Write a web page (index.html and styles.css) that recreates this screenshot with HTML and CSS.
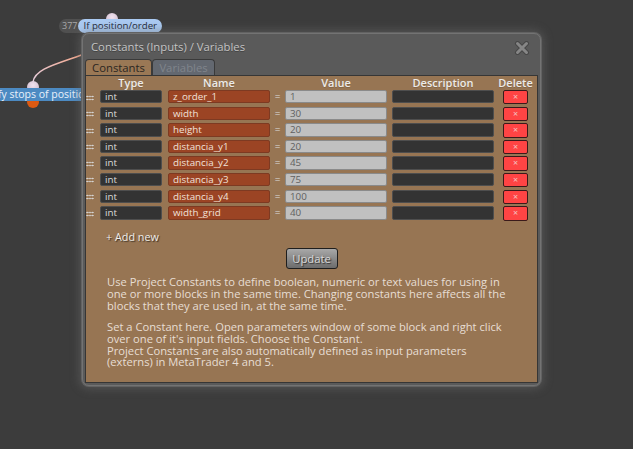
FILE: index.html
```html
<!DOCTYPE html>
<html>
<head>
<meta charset="utf-8">
<link rel="stylesheet" href="styles.css">
</head>
<body>
<div class="canvas">
  <svg class="wire" width="120" height="120" viewBox="0 0 120 120">
    <defs>
      <linearGradient id="wg" x1="0" y1="1" x2="1" y2="0">
        <stop offset="0" stop-color="#e6cfe0"/>
        <stop offset="1" stop-color="#f5a07e"/>
      </linearGradient>
    </defs>
    <path d="M33 82 C 35 68, 58 64, 90 52" fill="none" stroke="url(#wg)" stroke-width="1.5"/>
  </svg>

  <div class="node node-top">
    <span class="pin pin-top"></span>
    <span class="node-id">377</span>
    <span class="node-label">If position/order</span>
  </div>

  <div class="node node-left">
    <span class="pin pin-in"></span>
    <span class="pin pin-out"></span>
    <span class="node-bar">fy stops of position/order</span>
  </div>

  <div class="dialog">
    <div class="dialog-title">
      <span>Constants (Inputs) / Variables</span>
      <svg class="close" width="16" height="14" viewBox="0 0 16 14">
        <path d="M3.5 2.5 L12.5 11.5 M12.5 2.5 L3.5 11.5" stroke="#474747" stroke-width="5" stroke-linecap="round"/>
        <path d="M3.5 2.5 L12.5 11.5 M12.5 2.5 L3.5 11.5" stroke="#868686" stroke-width="3" stroke-linecap="round"/>
      </svg>
    </div>
    <div class="tabs">
      <span class="tab active">Constants</span>
      <span class="tab">Variables</span>
    </div>
    <div class="panel">
      <div class="row head">
        <span class="c-handle"></span>
        <span class="c-type">Type</span>
        <span class="c-name">Name</span>
        <span class="c-eq"></span>
        <span class="c-value">Value</span>
        <span class="c-desc">Description</span>
        <span class="c-del">Delete</span>
      </div>
      <div class="rows">
        <div class="row">
          <span class="grip"></span>
          <span class="c-type field f-type">int</span>
          <span class="c-name field f-name">z_order_1</span>
          <span class="c-eq">=</span>
          <span class="c-value field f-value">1</span>
          <span class="c-desc field f-desc"></span>
          <span class="c-del del">×</span>
        </div>
        <div class="row">
          <span class="grip"></span>
          <span class="c-type field f-type">int</span>
          <span class="c-name field f-name">width</span>
          <span class="c-eq">=</span>
          <span class="c-value field f-value">30</span>
          <span class="c-desc field f-desc"></span>
          <span class="c-del del">×</span>
        </div>
        <div class="row">
          <span class="grip"></span>
          <span class="c-type field f-type">int</span>
          <span class="c-name field f-name">height</span>
          <span class="c-eq">=</span>
          <span class="c-value field f-value">20</span>
          <span class="c-desc field f-desc"></span>
          <span class="c-del del">×</span>
        </div>
        <div class="row">
          <span class="grip"></span>
          <span class="c-type field f-type">int</span>
          <span class="c-name field f-name">distancia_y1</span>
          <span class="c-eq">=</span>
          <span class="c-value field f-value">20</span>
          <span class="c-desc field f-desc"></span>
          <span class="c-del del">×</span>
        </div>
        <div class="row">
          <span class="grip"></span>
          <span class="c-type field f-type">int</span>
          <span class="c-name field f-name">distancia_y2</span>
          <span class="c-eq">=</span>
          <span class="c-value field f-value">45</span>
          <span class="c-desc field f-desc"></span>
          <span class="c-del del">×</span>
        </div>
        <div class="row">
          <span class="grip"></span>
          <span class="c-type field f-type">int</span>
          <span class="c-name field f-name">distancia_y3</span>
          <span class="c-eq">=</span>
          <span class="c-value field f-value">75</span>
          <span class="c-desc field f-desc"></span>
          <span class="c-del del">×</span>
        </div>
        <div class="row">
          <span class="grip"></span>
          <span class="c-type field f-type">int</span>
          <span class="c-name field f-name">distancia_y4</span>
          <span class="c-eq">=</span>
          <span class="c-value field f-value">100</span>
          <span class="c-desc field f-desc"></span>
          <span class="c-del del">×</span>
        </div>
        <div class="row">
          <span class="grip"></span>
          <span class="c-type field f-type">int</span>
          <span class="c-name field f-name">width_grid</span>
          <span class="c-eq">=</span>
          <span class="c-value field f-value">40</span>
          <span class="c-desc field f-desc"></span>
          <span class="c-del del">×</span>
        </div>
      </div>
      <div class="add-new">+ Add new</div>
      <div class="actions"><span class="btn">Update</span></div>
      <div class="help">
        <p>Use Project Constants to define boolean, numeric or text values for using in one or more blocks in the same time. Changing constants here affects all the blocks that they are used in, at the same time.</p>
        <p>Set a Constant here. Open parameters window of some block and right click over one of it's input fields. Choose the Constant.<br>Project Constants are also automatically defined as input parameters (externs) in MetaTrader 4 and 5.</p>
      </div>
    </div>
  </div>
</div>
</body>
</html>
```

FILE: styles.css
```css
* { box-sizing: border-box; }
html, body {
  margin: 0;
  padding: 0;
  background: #3c3c3c;
  font-family: "Open Sans", "Noto Sans", sans-serif;
}
.canvas {
  position: relative;
  width: 633px;
  height: 449px;
  overflow: hidden;
  background: #3c3c3c;
}
.wire {
  position: absolute;
  left: 0;
  top: 0;
}
.node { position: absolute; }
.node-top {
  left: 59px;
  top: 19px;
  display: flex;
  align-items: center;
  height: 14px;
}
.node-id {
  height: 14px;
  padding: 0 8px 0 3px;
  margin-right: -7px;
  background: #505050;
  color: #a8a8a8;
  font-size: 9px;
  line-height: 14px;
  border-radius: 7px 0 0 7px;
}
.node-label {
  position: relative;
  height: 14px;
  padding: 0 5px 0 5px;
  background: #aacaf2;
  color: #1b2636;
  font-size: 9.7px;
  line-height: 14px;
  border-radius: 7px;
}
.pin {
  position: absolute;
  width: 12px;
  height: 12px;
  border-radius: 50%;
}
.pin-top {
  left: 47px;
  top: -6px;
  background: radial-gradient(circle at 50% 35%, #f0e2ee, #c9b4c8);
}
.node-left {
  left: 0;
  top: 88px;
  width: 82px;
  height: 13px;
}
.node-bar {
  position: relative;
  display: block;
  height: 13px;
  width: 120px;
  margin-left: -2px;
  background: #4c8ac2;
  color: #e9f1fa;
  font-size: 10.5px;
  line-height: 13px;
  white-space: nowrap;
}
.pin-in {
  left: 27px;
  top: -7px;
  background: radial-gradient(circle at 50% 35%, #f0e2ee, #c6b2c6);
}
.pin-out {
  left: 27px;
  top: 8px;
  background: #dd5a12;
}

.dialog {
  position: absolute;
  left: 82px;
  top: 33px;
  width: 459px;
  height: 353px;
  background: #5a5a5a;
  border: 1px solid #737373;
  border-radius: 7px;
  box-shadow: 0 0 0 1px #626262, 0 0 10px 3px rgba(110,110,110,0.45);
  padding: 0 2px 2px 2px;
  display: flex;
  flex-direction: column;
}
.dialog-title {
  height: 25px;
  display: flex;
  align-items: center;
  justify-content: space-between;
  padding: 0 8px 0 6px;
  color: #c4c4c4;
  font-size: 11.3px;
  text-shadow: 0 1px 0 #444;
}
.close { display: block; margin-top: 2px; }
.tabs {
  display: flex;
  height: 16px;
}
.tab {
  height: 16px;
  border: 1px solid #3a3a3a;
  border-bottom: none;
  border-radius: 4px 4px 0 0;
  font-size: 11.3px;
  line-height: 15px;
  background: #636870;
  color: #80858c;
  width: 63px;
  text-align: center;
}
.tab.active {
  background: #9a7855;
  color: #2b2622;
  width: 67px;
}
.panel {
  flex: 1;
  background: #977553;
  border: 1px solid #363636;
  display: flex;
  flex-direction: column;
}
.row {
  display: flex;
  align-items: flex-start;
  height: 14px;
}
.head {
  height: 14px;
  color: #ecebe8;
  font-weight: 600;
  font-size: 11px;
  line-height: 13px;
  text-shadow: 0 1px 0 rgba(0,0,0,0.15);
}
.head span { text-align: center; white-space: nowrap; }
.head .c-del { display: flex; justify-content: center; }
.rows {
  display: flex;
  flex-direction: column;
  gap: 2.6px;
}
.c-handle { width: 14px; flex: none; }
.c-type { width: 62px; flex: none; }
.c-name { width: 102px; flex: none; margin-left: 6px; }
.c-eq { width: 15px; flex: none; text-align: center; color: #ddd; font-size: 10px; line-height: 13px; }
.c-value { width: 102px; flex: none; }
.c-desc { width: 102px; flex: none; margin-left: 5px; }
.c-del { width: 25px; flex: none; margin-left: 9px; }
.grip {
  height: 6px;
  width: 8px;
  flex: none;
  margin: 4.5px 6px 0 0;
  background-image: radial-gradient(circle, #d8d8d8 0.8px, transparent 1.05px);
  background-size: 2.67px 3px;
}
.field {
  height: 13.4px;
  border: 1px solid #5f5f5f;
  border-radius: 2px;
  font-size: 9.8px;
  line-height: 11px;
  padding-left: 4px;
  overflow: hidden;
  white-space: nowrap;
}
.f-type { background: #333; color: #ddd; border-color: #4e4e4e; }
.f-name { background: #9b4424; color: #f1e2da; border-color: #7d3a22; }
.f-value { background: #c0c0c0; color: #606060; border-color: #8a8a8a; }
.f-desc { background: #333; border-color: #4e4e4e; }
.del {
  height: 14.4px;
  background: #ff4444;
  border: 1px solid #3a1a1a;
  border-radius: 2px;
  color: #f3c2c2;
  font-size: 9px;
  line-height: 12px;
  text-align: center;
}
.add-new {
  margin: 10px 0 0 20px;
  color: #f1eee9;
  font-size: 10.8px;
  line-height: 14px;
  text-shadow: 1px 1px 1px #3a3026;
}
.actions {
  display: flex;
  justify-content: center;
  margin-top: 4px;
}
.btn {
  width: 52px;
  height: 21px;
  border: 1px solid #1e1e1e;
  border-radius: 3px;
  background: linear-gradient(#a8a8a8, #6c6c6c);
  color: #dadada;
  font-size: 11.3px;
  line-height: 19px;
  text-align: center;
  text-shadow: 1px 1px 1px #2a2a2a;
}
.help {
  padding: 7px 25px 0 21px;
  color: #e7ded3;
  font-size: 11.2px;
  line-height: 11.7px;
}
.help p { margin: 0 0 10px 0; }
```
